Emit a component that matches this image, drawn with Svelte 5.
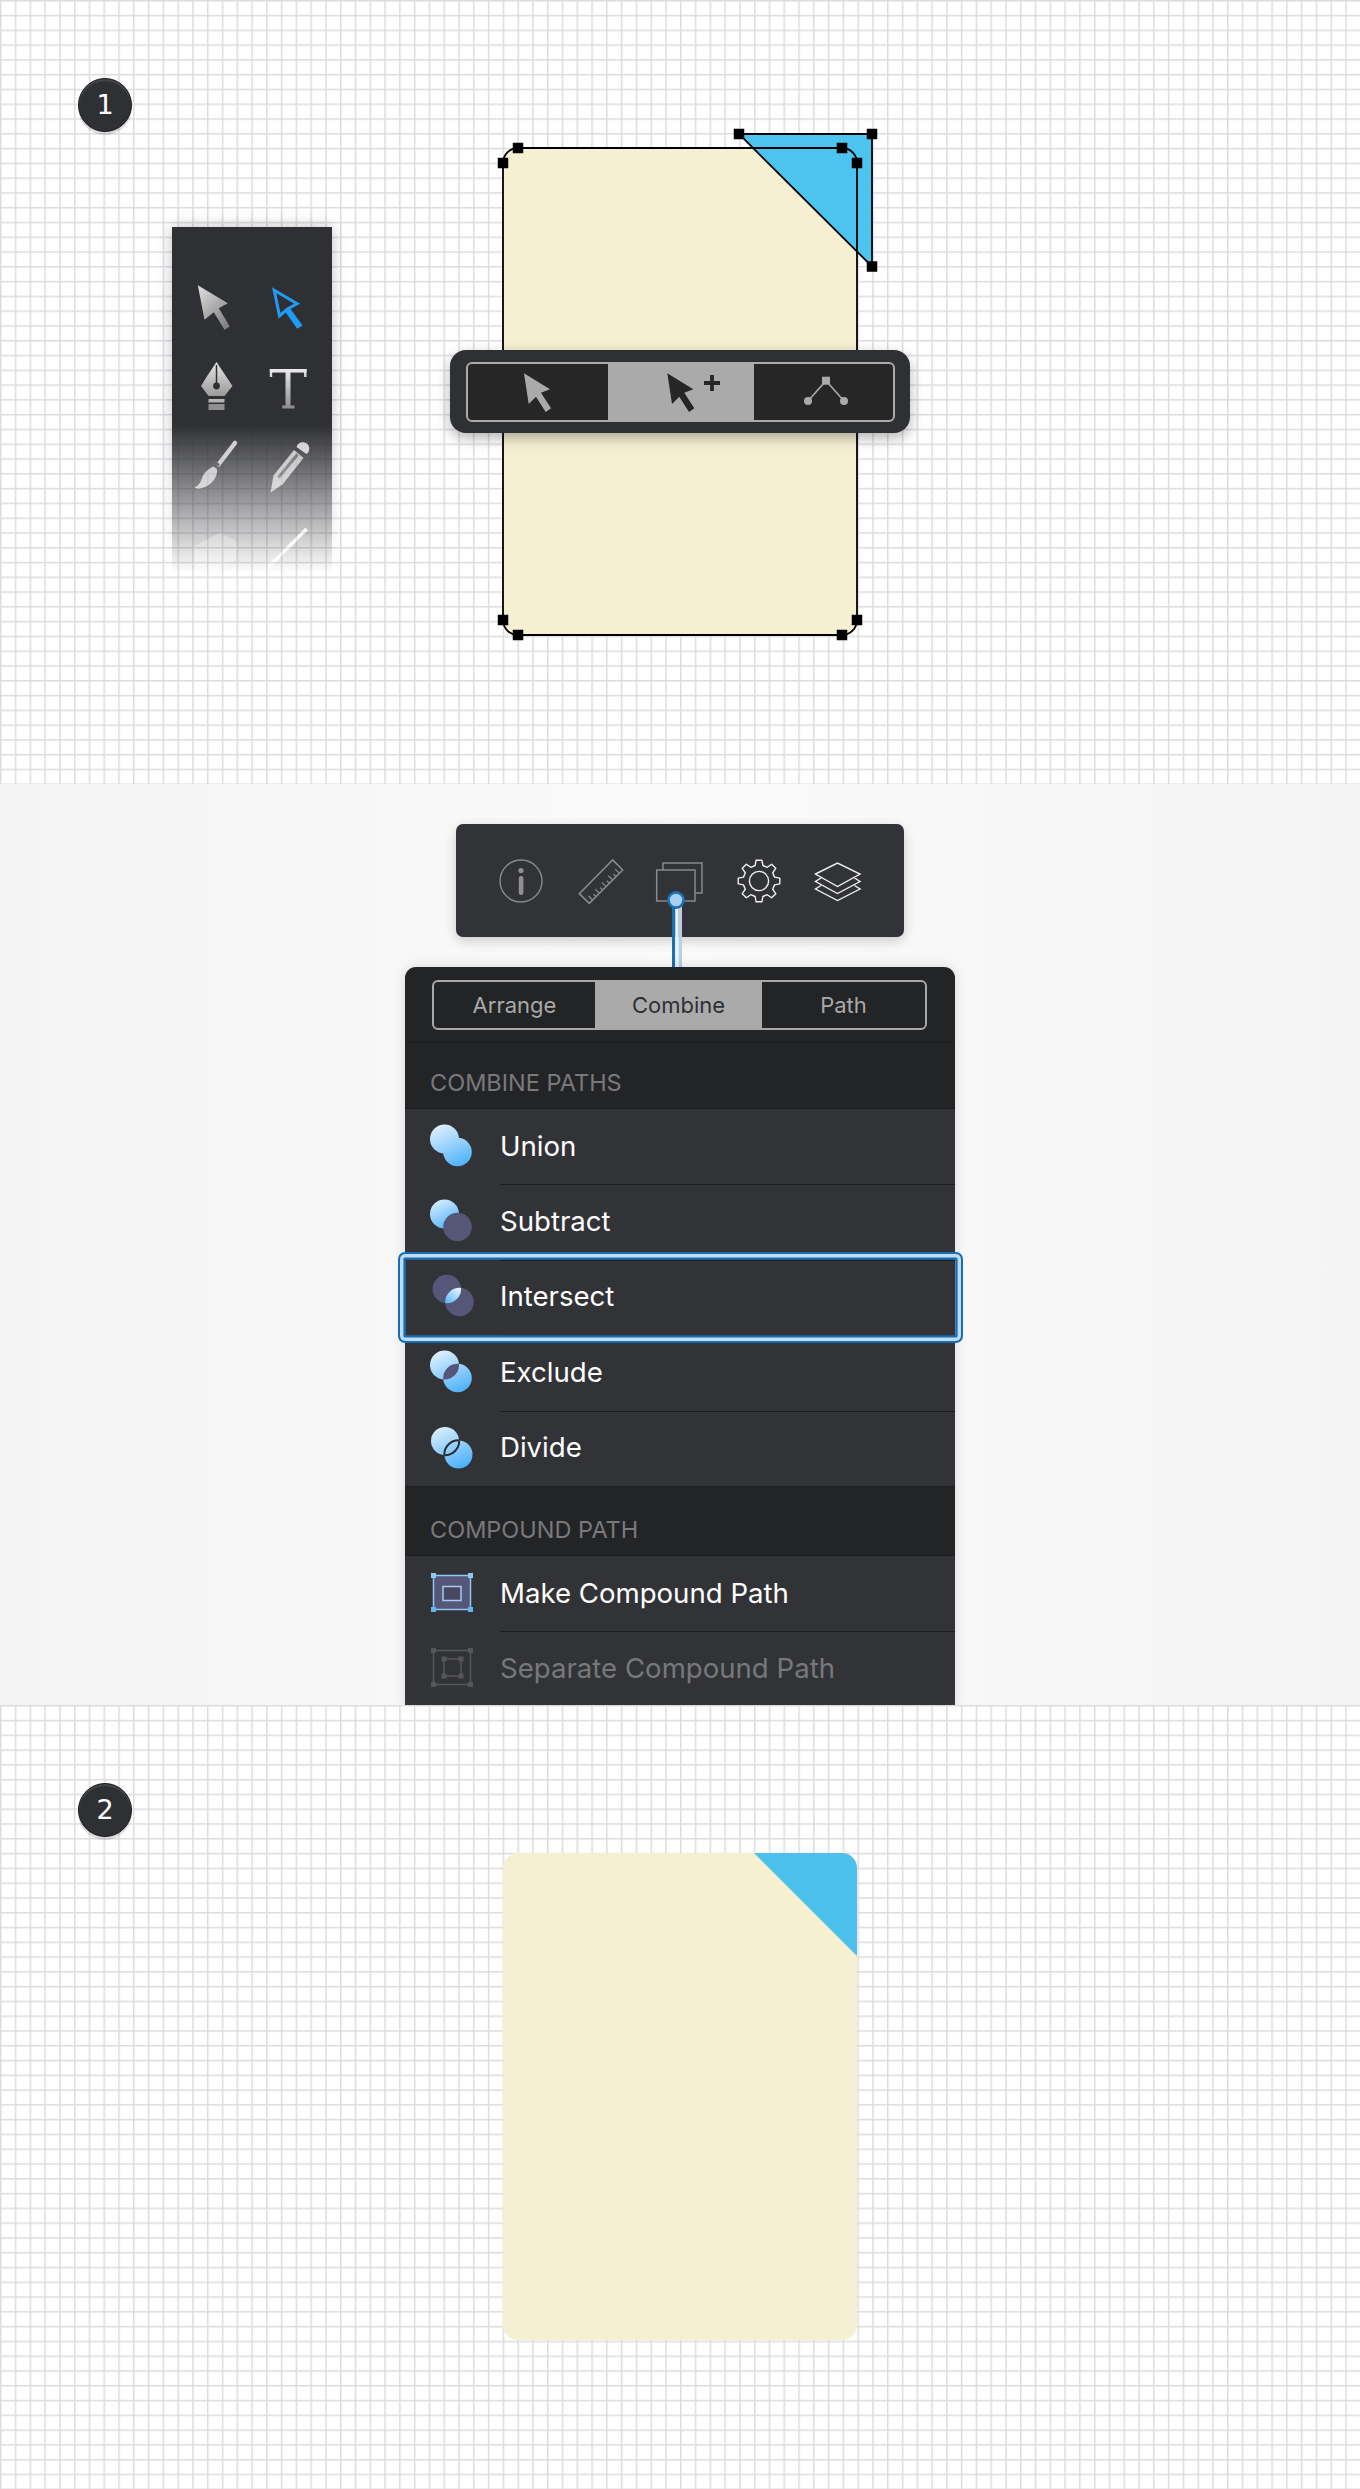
<script>
  const rows1 = [
    { label: 'Union', icon: 'union' },
    { label: 'Subtract', icon: 'subtract' },
    { label: 'Intersect', icon: 'intersect', selected: true },
    { label: 'Exclude', icon: 'exclude' },
    { label: 'Divide', icon: 'divide' }
  ];
  const rows2 = [
    { label: 'Make Compound Path', icon: 'make' },
    { label: 'Separate Compound Path', icon: 'separate', disabled: true }
  ];

  function gearPath() {
    const c = 25, ro = 21, ri = 16, n = 8;
    let d = '';
    for (let i = 0; i < n; i++) {
      const a = (i * 360) / n - 90;
      const pts = [[ri, a - 14], [ro, a - 8], [ro, a + 8], [ri, a + 14]];
      for (const [r, deg] of pts) {
        const t = (deg * Math.PI) / 180;
        d += (d ? 'L' : 'M') + (c + r * Math.cos(t)).toFixed(2) + ' ' + (c + r * Math.sin(t)).toFixed(2);
      }
    }
    return d + 'Z';
  }

  function rulerTicks() {
    let d = '';
    const ax = 13.3, ay = 47.3, bx = 46.7, by = 14;
    for (let i = 1; i <= 9; i++) {
      const x = ax + ((bx - ax) * i) / 10;
      const y = ay + ((by - ay) * i) / 10;
      const l = i % 2 ? 6 : 3.5;
      d += `M${x.toFixed(1)} ${y.toFixed(1)}L${(x - l * 0.707).toFixed(1)} ${(y - l * 0.707).toFixed(1)}`;
    }
    return d;
  }
</script>

{#snippet grid()}
  <svg class="grid" width="100%" height="100%" aria-hidden="true">
    <defs>
      <pattern id="tile" width="14.783" height="14.783" patternUnits="userSpaceOnUse">
        <path d="M0.75 0V14.783M0 0.75H14.783" stroke="#dcdce0" stroke-width="1.5" fill="none" />
      </pattern>
    </defs>
    <rect width="100%" height="100%" fill="url(#tile)" />
  </svg>
{/snippet}

{#snippet handle(x, y)}
  <rect x={x - 5.25} y={y - 5.25} width="10.5" height="10.5" fill="#000" />
{/snippet}

{#snippet rowIcon(kind)}
  <svg class="row-icon" viewBox="0 0 60 60" aria-hidden="true">
    {#if kind === 'union'}
      <circle cx="23.5" cy="22" r="14.5" fill="url(#blueAll)" />
      <circle cx="36.5" cy="35" r="14.3" fill="url(#blueAll)" />
    {:else if kind === 'subtract'}
      <circle cx="23.5" cy="22" r="14.5" fill="url(#blue)" />
      <circle cx="36.5" cy="35" r="14.3" fill="#565678" />
    {:else if kind === 'intersect'}
      <clipPath id="clipI"><circle cx="38.5" cy="35" r="14.3" /></clipPath>
      <circle cx="25.8" cy="22" r="14.3" fill="#565678" />
      <circle cx="38.5" cy="35" r="14.3" fill="#565678" />
      <circle cx="25.8" cy="22" r="14.3" fill="url(#blueLens)" clip-path="url(#clipI)" />
    {:else if kind === 'exclude'}
      <clipPath id="clipE"><circle cx="36.5" cy="35" r="14.3" /></clipPath>
      <circle cx="23.5" cy="22" r="14.5" fill="url(#blueAll)" />
      <circle cx="36.5" cy="35" r="14.3" fill="url(#blueAll)" />
      <circle cx="23.5" cy="22" r="14.5" fill="#565678" clip-path="url(#clipE)" />
    {:else if kind === 'divide'}
      <clipPath id="clipD1"><circle cx="37.5" cy="36.5" r="14" /></clipPath>
      <clipPath id="clipD2"><circle cx="24" cy="23" r="14" /></clipPath>
      <circle cx="24" cy="23" r="14" fill="url(#blueAll)" />
      <circle cx="37.5" cy="36.5" r="14" fill="url(#blueAll)" />
      <circle cx="24" cy="23" r="14.2" fill="none" stroke="#2b2c30" stroke-width="2" clip-path="url(#clipD1)" />
      <circle cx="37.5" cy="36.5" r="14.2" fill="none" stroke="#2b2c30" stroke-width="2" clip-path="url(#clipD2)" />
    {:else if kind === 'make'}
      <rect x="12.5" y="11.5" width="37" height="34" fill="#565678" stroke="#8cc7f5" stroke-width="1.5" />
      <rect x="22" y="22.5" width="18" height="14" fill="#474762" stroke="#a3cdf0" stroke-width="1.5" />
      <rect x="10" y="9" width="5" height="5" fill="#8cc7f5" />
      <rect x="47" y="9" width="5" height="5" fill="#8cc7f5" />
      <rect x="10" y="43" width="5" height="5" fill="#5fb4f5" />
      <rect x="47" y="43" width="5" height="5" fill="#5fb4f5" />
    {:else}
      <rect x="12.5" y="11.5" width="37" height="34" fill="none" stroke="#56575b" stroke-width="1.5" />
      <rect x="23" y="20" width="17" height="17" fill="none" stroke="#56575b" stroke-width="1.5" />
      <g fill="#56575b">
        <rect x="10" y="9" width="5" height="5" /><rect x="47" y="9" width="5" height="5" />
        <rect x="10" y="43" width="5" height="5" /><rect x="47" y="43" width="5" height="5" />
        <rect x="20.5" y="17.5" width="5" height="5" /><rect x="37.5" y="17.5" width="5" height="5" />
        <rect x="20.5" y="34.5" width="5" height="5" /><rect x="37.5" y="34.5" width="5" height="5" />
      </g>
    {/if}
  </svg>
{/snippet}

{#snippet row(r)}
  <div class="row" class:selected={r.selected} class:disabled={r.disabled}>
    {@render rowIcon(r.icon)}
    <span class="row-label">{r.label}</span>
    {#if r.selected}<div class="focus"></div>{/if}
  </div>
{/snippet}

<svg class="defs" width="0" height="0" aria-hidden="true">
  <defs>
    <linearGradient id="blue" x1="0.2" y1="0" x2="0.7" y2="1">
      <stop offset="0" stop-color="#dceffd" /><stop offset="1" stop-color="#4db2fb" />
    </linearGradient>
    <linearGradient id="blueAll" gradientUnits="userSpaceOnUse" x1="20" y1="8" x2="38" y2="50">
      <stop offset="0" stop-color="#dceffd" /><stop offset="1" stop-color="#4db2fb" />
    </linearGradient>
    <linearGradient id="blueLens" gradientUnits="userSpaceOnUse" x1="36" y1="22" x2="26" y2="36">
      <stop offset="0" stop-color="#dceffd" /><stop offset="1" stop-color="#5cb8fb" />
    </linearGradient>
    <linearGradient id="steel" x1="0.1" y1="0" x2="0.8" y2="1">
      <stop offset="0" stop-color="#dcdcdc" /><stop offset="1" stop-color="#808080" />
    </linearGradient>
    <linearGradient id="steelV" x1="0" y1="0" x2="0" y2="1">
      <stop offset="0" stop-color="#e6e6e6" /><stop offset="1" stop-color="#9a9a9a" />
    </linearGradient>
    <linearGradient id="steelT" gradientUnits="userSpaceOnUse" x1="0" y1="368" x2="0" y2="408">
      <stop offset="0" stop-color="#eaeaea" /><stop offset="1" stop-color="#8a8a8a" />
    </linearGradient>
  </defs>
</svg>

<main class="page">
  <section class="canvas first">
    {@render grid()}
    <div class="badge badge-one">1</div>

    <div class="tools-fade">
      <div class="tools">
        <svg viewBox="185.5 276.5 60 60" aria-hidden="true">
          <path d="M197.3 284.7L227.3 302.7L218.3 307.7L229.3 326L224 329.3L213.3 311.7L204 319.3Z" fill="url(#steel)" />
        </svg>
        <svg viewBox="258.5 276.5 60 60" aria-hidden="true">
          <path d="M273.7 289.8L296.6 303.2L286.6 308.8L279 315.4Z" fill="none" stroke="#1f9cf6" stroke-width="3" />
          <path d="M289 307L302 325L296.7 328.3L284.5 311Z" fill="#1f9cf6" />
        </svg>
        <svg viewBox="185.5 356 60 60" aria-hidden="true">
          <path d="M216 361L226 376L232 385L224 395H208L200.5 385L206 376Z" fill="url(#steelV)" />
          <path d="M216 364V384" stroke="#2f3033" stroke-width="1.5" />
          <circle cx="216" cy="385" r="3.4" fill="#2f3033" />
          <rect x="208" y="398" width="16" height="3.5" fill="#b5b5b5" />
          <rect x="208" y="403" width="16" height="6" fill="#8f8f8f" />
        </svg>
        <svg viewBox="258.5 356 60 60" aria-hidden="true">
          <g fill="url(#steelT)">
            <rect x="269.3" y="368" width="36.7" height="3.6" />
            <rect x="269.3" y="368" width="2.4" height="8" />
            <rect x="303.6" y="368" width="2.4" height="8" />
            <rect x="285" y="371" width="5" height="34.5" />
            <rect x="281.7" y="404.5" width="12.3" height="3" />
          </g>
        </svg>
        <svg viewBox="185.5 435.5 60 60" aria-hidden="true">
          <path d="M234.5 442.5L218 464" stroke="#c8c8c8" stroke-width="4.5" stroke-linecap="round" />
          <path d="M218.5 465L214.5 462" stroke="#3a3a3c" stroke-width="3" />
          <path d="M216.5 468.5C217.5 476 212 484 203 487C200 488.5 196 488.5 194 487C198 485.5 200 482 201 479C203 472 208 468 213 466Z" fill="#bdbdbd" />
        </svg>
        <svg viewBox="258.5 435.5 60 60" aria-hidden="true">
          <path d="M270 492L273 475L293.5 449.5L303 457.5L282 484Z" fill="#bdbdbd" />
          <path d="M278 477L297 454" stroke="#5e5e60" stroke-width="3" />
          <path d="M296 446.5A6.5 6.5 0 1 1 306 453.5Z" fill="#cfcfcf" />
        </svg>
        <svg viewBox="185.5 515 60 60" aria-hidden="true">
          <g opacity="0.3">
            <path d="M193.3 545L219.3 531.7L236 540L213.3 554Z" fill="#e6e6e6" />
            <path d="M193.3 545L213.3 554V572L193.3 562Z" fill="#fff" />
            <path d="M213.3 554L236 540V558L213.3 572Z" fill="#dadada" />
          </g>
        </svg>
        <svg viewBox="258.5 515 60 60" aria-hidden="true">
          <path d="M306 528L268 566" stroke="#f2f2f2" stroke-width="3.5" />
        </svg>
      </div>
    </div>

    <svg class="art" viewBox="490 120 400 530" aria-hidden="true">
      <rect x="503" y="148" width="354" height="487" rx="15" fill="#f6f0d3" />
      <path d="M739 134H872V266.5Z" fill="#4dc3f0" stroke="#000" stroke-width="1.8" />
      <rect x="503" y="148" width="354" height="487" rx="15" fill="none" stroke="#000" stroke-width="1.8" />
      {@render handle(739, 134)}
      {@render handle(872, 134)}
      {@render handle(872, 266.5)}
      {@render handle(503, 163)}
      {@render handle(518, 148)}
      {@render handle(842, 148)}
      {@render handle(857, 163)}
      {@render handle(503, 620)}
      {@render handle(518, 635)}
      {@render handle(842, 635)}
      {@render handle(857, 620)}
    </svg>

    <div class="pathbar">
      <div class="segs">
        <div class="seg one">
          <svg viewBox="468 364 140 56" aria-hidden="true">
            <path d="M524 373.3L550 389.3L541 392.7L551 408.3L545.7 412L536 396.7L528.7 404Z" fill="#aaa" />
          </svg>
        </div>
        <div class="seg two active">
          <svg viewBox="608 364 146 56" aria-hidden="true">
            <path d="M667.3 373.3L693.3 389.3L684.3 392.7L694.3 408.3L689 412L679.3 396.7L672 404Z" fill="#262626" />
            <path d="M704 383H720M712 375V391" stroke="#262626" stroke-width="3.8" />
          </svg>
        </div>
        <div class="seg three">
          <svg viewBox="754 364 139 56" aria-hidden="true">
            <path d="M808 401L826 380.7L844 401" fill="none" stroke="#aaa" stroke-width="1.6" />
            <rect x="822" y="376.7" width="8" height="8" fill="#aaa" />
            <circle cx="808" cy="401" r="4" fill="#aaa" />
            <circle cx="844" cy="401" r="4" fill="#aaa" />
          </svg>
        </div>
      </div>
    </div>
  </section>

  <section class="middle">
    <div class="bar-wrap">
      <div class="iconbar">
        <svg viewBox="1 0 50 50" aria-hidden="true">
          <circle cx="25" cy="25" r="21" fill="none" stroke="#88898c" stroke-width="1.4" />
          <circle cx="25" cy="14.5" r="2.6" fill="#909094" />
          <rect x="22.8" y="20" width="4.6" height="19" rx="2.2" fill="#909094" />
        </svg>
        <svg viewBox="0 0 50 50" aria-hidden="true">
          <path d="M3.3 37.7L36.7 4L46.7 14L13.3 47.3Z" fill="none" stroke="#88898c" stroke-width="1.6" />
          <path d={rulerTicks()} stroke="#88898c" stroke-width="1.3" fill="none" />
        </svg>
        <svg viewBox="0 0 50 50" aria-hidden="true">
          <path d="M8 14V7H47V37H40" fill="none" stroke="#88898c" stroke-width="1.5" />
          <rect x="1.7" y="14" width="38.3" height="31" fill="none" stroke="#88898c" stroke-width="1.5" />
        </svg>
        <svg viewBox="0 0 50 50" aria-hidden="true">
          <path d={gearPath()} fill="none" stroke="#f0f0f0" stroke-width="1.4" stroke-linejoin="round" />
          <circle cx="25" cy="25" r="9.6" fill="none" stroke="#f0f0f0" stroke-width="1.4" />
        </svg>
        <svg viewBox="0 0 50 50" aria-hidden="true">
          <path d="M2.5 18L24.5 7L47 18L24.5 30.5Z" fill="none" stroke="#f0f0f0" stroke-width="1.4" />
          <path d="M8 22L2.5 25.5L24.5 37.5L47 25.5L41.5 22" fill="none" stroke="#f0f0f0" stroke-width="1.4" />
          <path d="M8 29.5L2.5 33L24.5 44.5L47 33L41.5 29.5" fill="none" stroke="#f0f0f0" stroke-width="1.4" />
        </svg>
      </div>
      <svg class="connector" viewBox="0 0 20 80" aria-hidden="true">
        <rect x="6" y="10" width="3.2" height="70" fill="#1b6fb3" />
        <rect x="9.2" y="10" width="3.6" height="70" fill="#e9f3fc" />
        <rect x="12.8" y="10" width="3.2" height="70" fill="#b9cfe2" />
        <circle cx="10" cy="10" r="7.6" fill="#a8d0f7" stroke="#1b6fb3" stroke-width="2.6" />
      </svg>
    </div>

    <div class="panel">
      <div class="tabs-area">
        <div class="tabs">
          <div class="tab arrange">Arrange</div>
          <div class="tab combine active">Combine</div>
          <div class="tab path">Path</div>
        </div>
      </div>
      <div class="section-head first-head">COMBINE PATHS</div>
      {#each rows1 as r}
        {@render row(r)}
      {/each}
      <div class="section-head second-head">COMPOUND PATH</div>
      {#each rows2 as r}
        {@render row(r)}
      {/each}
    </div>
  </section>

  <section class="canvas last">
    {@render grid()}
    <div class="badge badge-two">2</div>
    <div class="sheet"><div class="corner"></div></div>
  </section>
</main>

<style>
  :global(body) {
    margin: 0;
    background: #fff;
  }
  .defs {
    position: absolute;
  }
  .page {
    width: 1360px;
    height: 2489px;
    overflow: hidden;
    font-family: Inter, "Liberation Sans", sans-serif;
  }
  .canvas {
    position: relative;
    height: 784px;
    background: #fff;
    overflow: hidden;
  }
  .grid {
    position: absolute;
    inset: 0;
    display: block;
  }
  .badge {
    position: absolute;
    left: 78px;
    width: 54px;
    height: 54px;
    box-sizing: border-box;
    border-radius: 50%;
    background: #2f3034;
    border: 1.5px solid #1d1e20;
    box-shadow: 0 3px 0 rgba(0, 0, 0, 0.13), inset 0 2px 1px rgba(255, 255, 255, 0.12);
    color: #fff;
    font: 27px/51px "DejaVu Sans", sans-serif;
    text-align: center;
  }
  .badge-one,
  .badge-two {
    top: 78px;
  }

  .tools-fade {
    position: absolute;
    left: 152px;
    top: 207px;
    padding: 20px;
    -webkit-mask-image: linear-gradient(to bottom, #000 218px, transparent 366px);
    mask-image: linear-gradient(to bottom, #000 218px, transparent 366px);
  }
  .tools {
    width: 160px;
    height: 348px;
    box-sizing: border-box;
    padding-top: 50px;
    background: #2f3034;
    box-shadow: 0 0 14px rgba(0, 0, 0, 0.25);
    display: grid;
    grid-template-columns: 73px 73px;
    grid-auto-rows: 79.5px;
    justify-content: center;
    justify-items: center;
  }
  .tools svg {
    width: 60px;
    height: 60px;
    display: block;
  }

  .art {
    position: absolute;
    left: 490px;
    top: 120px;
    width: 400px;
    height: 530px;
  }

  .pathbar {
    position: absolute;
    left: 450px;
    top: 350px;
    width: 460px;
    height: 83px;
    box-sizing: border-box;
    padding: 12px 15px 11px 16px;
    border-radius: 16px;
    background: #2f3033;
    box-shadow: 0 5px 14px rgba(0, 0, 0, 0.3);
    display: flex;
  }
  .segs {
    flex: 1;
    display: flex;
    box-sizing: border-box;
    border: 2px solid #aaa;
    border-radius: 6px;
    overflow: hidden;
    background: #262626;
  }
  .seg svg {
    width: 100%;
    height: 100%;
    display: block;
  }
  .seg.one {
    width: 140px;
  }
  .seg.two {
    width: 146px;
  }
  .seg.three {
    flex: 1;
  }
  .seg.active {
    background: #aaa;
  }

  .middle {
    position: relative;
    height: 921px;
    box-sizing: border-box;
    padding-top: 40px;
    overflow: hidden;
    background: linear-gradient(to right, #f4f4f4, #fafafa 50%, #f4f4f4);
    display: flex;
    flex-direction: column;
    align-items: center;
  }
  .bar-wrap {
    position: relative;
    width: 448px;
  }
  .iconbar {
    height: 113px;
    border-radius: 7px;
    background: #323337;
    box-shadow: 0 4px 12px rgba(0, 0, 0, 0.18);
    display: grid;
    grid-template-columns: repeat(5, 79.2px);
    justify-content: center;
    align-items: center;
    justify-items: center;
  }
  .iconbar svg {
    width: 50px;
    height: 50px;
    display: block;
  }
  .connector {
    position: absolute;
    left: 210px;
    top: 66px;
    width: 20px;
    height: 80px;
  }
  .panel {
    position: relative;
    width: 550px;
    margin-top: 30px;
    flex: none;
    border-radius: 11px 11px 0 0;
    background: #232426;
    box-shadow: 0 0 12px rgba(0, 0, 0, 0.13);
  }
  .tabs-area {
    height: 76px;
    box-sizing: border-box;
    padding: 13px 28px 0 27px;
    border-bottom: 1px solid #1b1c1e;
  }
  .tabs {
    height: 50px;
    box-sizing: border-box;
    border: 2px solid #a8a8a8;
    border-radius: 6px;
    overflow: hidden;
    display: flex;
  }
  .tab {
    display: flex;
    align-items: center;
    justify-content: center;
    color: #a9a9a9;
    font-size: 22px;
  }
  .tab.arrange {
    width: 161px;
  }
  .tab.combine {
    width: 167px;
  }
  .tab.path {
    flex: 1;
  }
  .tab.active {
    background: #aaa;
    color: #2e2f33;
  }
  .section-head {
    box-sizing: border-box;
    padding-left: 25px;
    color: #79797b;
    font-size: 23.5px;
    line-height: 26px;
    border-bottom: 1px solid #1b1c1e;
  }
  .first-head {
    height: 66px;
    padding-top: 26.5px;
  }
  .second-head {
    height: 70px;
    padding-top: 30px;
    border-top: 1px solid #1f2022;
  }
  .row {
    position: relative;
    height: 75.4px;
    background: #323337;
    display: flex;
    align-items: center;
  }
  .row + .row::before {
    content: "";
    position: absolute;
    left: 95px;
    right: 0;
    top: 0;
    height: 1px;
    background: #1c1d1f;
  }
  .row-icon {
    width: 60px;
    height: 60px;
    margin-left: 16px;
    margin-right: 19px;
    flex: none;
  }
  .row-label {
    color: #fff;
    font-size: 27.6px;
    margin-top: -2px;
  }
  .row.disabled .row-label {
    color: #77787b;
  }
  .focus {
    position: absolute;
    inset: -7.5px;
    box-sizing: border-box;
    border: 2px solid #1a6db0;
    border-radius: 7px;
    box-shadow: inset 0 0 0 3.4px #bcdcf8, inset 0 0 0 5.8px #1a6db0;
    z-index: 2;
  }

  .sheet {
    position: absolute;
    left: 503px;
    top: 148px;
    width: 354px;
    height: 487px;
    border-radius: 15px;
    background: #f6f0d3;
    overflow: hidden;
  }
  .corner {
    position: absolute;
    right: 0;
    top: 0;
    width: 103px;
    height: 103px;
    background: #4dc0ee;
    clip-path: polygon(0 0, 100% 0, 100% 100%);
  }
</style>
